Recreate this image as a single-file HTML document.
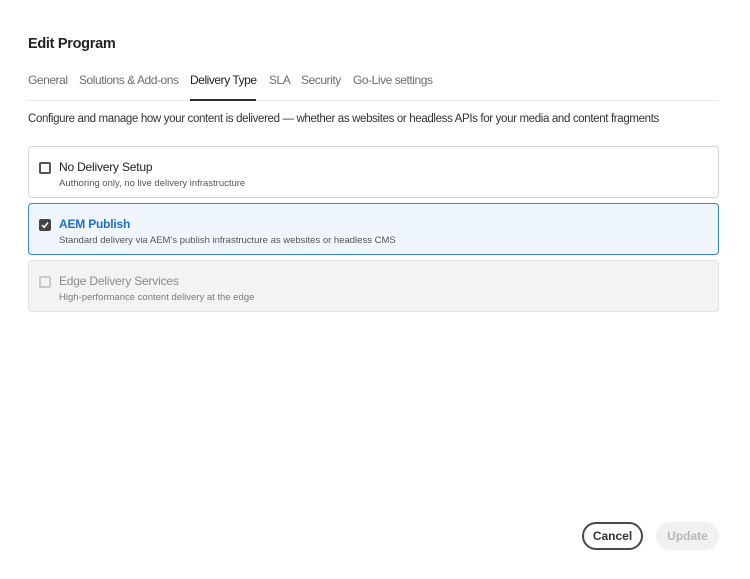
<!DOCTYPE html>
<html><head><meta charset="utf-8"><style>
*{margin:0;padding:0;box-sizing:border-box}
body{width:750px;height:579px;background:#fff;font-family:"Liberation Sans",sans-serif;color:#2c2c2c;position:relative;overflow:hidden}
h1{position:absolute;left:28px;top:36px;font-size:14.5px;font-weight:bold;color:#222;letter-spacing:-0.3px}
.tab{position:absolute;top:73px;font-size:12px;color:#6e6e6e;letter-spacing:-0.45px;white-space:nowrap}
.tab.on{color:#222}
.line{position:absolute;left:28px;top:100px;width:690px;height:1px;background:#e6e6e6}
.ul{position:absolute;left:190px;top:99px;width:66px;height:2px;background:#2c2c2c}
.desc{position:absolute;left:28px;top:113px;font-size:11.5px;color:#333;letter-spacing:-0.35px;white-space:nowrap}
.card{position:absolute;left:28px;width:691px;height:52px;border:1px solid #d6d6d6;border-radius:4px;background:#fff}
.cb{position:absolute;left:10px;top:15px;width:12px;height:12px;border:2px solid #555;border-radius:2px}
.t{position:absolute;left:30px;top:13px;font-size:12px;color:#222;letter-spacing:-0.2px;white-space:nowrap}
.s{position:absolute;left:30px;top:31px;font-size:9.5px;color:#555;white-space:nowrap}
.btn{position:absolute;top:522px;height:28px;border-radius:14px;font-size:12px;font-weight:bold;text-align:center;line-height:24px}
</style></head><body>
<h1>Edit Program</h1>
<div class="tab" style="left:28px">General</div>
<div class="tab" style="left:79px">Solutions &amp; Add-ons</div>
<div class="tab on" style="left:190px">Delivery Type</div>
<div class="tab" style="left:269px">SLA</div>
<div class="tab" style="left:301px">Security</div>
<div class="tab" style="left:353px">Go-Live settings</div>
<div class="line"></div><div class="ul"></div>
<div class="desc">Configure and manage how your content is delivered — whether as websites or headless APIs for your media and content fragments</div>
<div class="card" style="top:146px"><div class="cb"></div><div class="t">No Delivery Setup</div><div class="s">Authoring only, no live delivery infrastructure</div></div>
<div class="card" style="top:203px;background:#f0f6ff;border-color:#3b82e8"><div class="cb" style="background:#444;border-color:#444"><svg width="8" height="8" viewBox="0 0 8 8" style="position:absolute;left:0;top:0"><path d="M1 4.2 L3.2 6.2 L7 1.5" stroke="#fff" stroke-width="1.6" fill="none"/></svg></div><div class="t" style="color:#1f6ed4;font-weight:bold">AEM Publish</div><div class="s">Standard delivery via AEM’s publish infrastructure as websites or headless CMS</div></div>
<div class="card" style="top:260px;background:#f3f3f3;border-color:#e0e0e0"><div class="cb" style="border-color:#c8c8c8"></div><div class="t" style="color:#8a8a8a">Edge Delivery Services</div><div class="s" style="color:#7a7a7a">High-performance content delivery at the edge</div></div>
<div class="btn" style="left:582px;width:61px;border:2px solid #4a4a4a;color:#333">Cancel</div>
<div class="btn" style="left:656px;width:63px;background:#f1f1f1;color:#b8b8b8;line-height:28px">Update</div>
</body></html>
